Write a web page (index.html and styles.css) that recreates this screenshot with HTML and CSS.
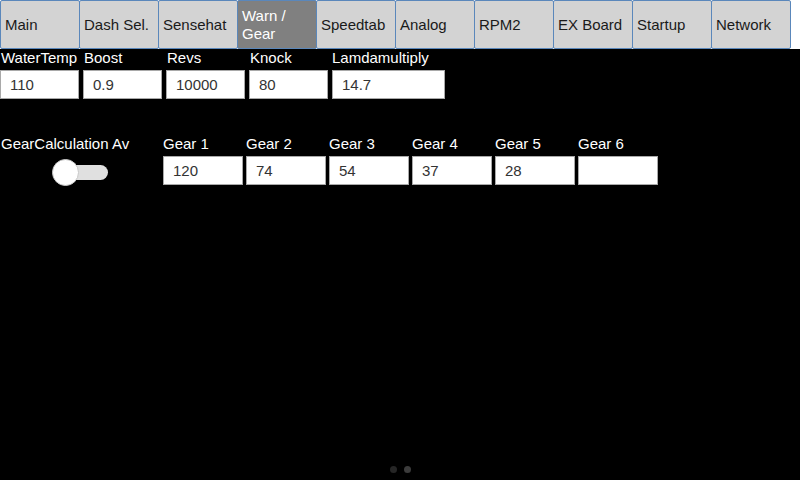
FILE: index.html
```html
<!DOCTYPE html>
<html>
<head>
<meta charset="utf-8">
<link rel="stylesheet" href="styles.css">
</head>
<body>
<div class="app">
  <nav class="tabbar">
    <div class="tab">Main</div>
    <div class="tab">Dash Sel.</div>
    <div class="tab">Sensehat</div>
    <div class="tab active">Warn / Gear</div>
    <div class="tab">Speedtab</div>
    <div class="tab">Analog</div>
    <div class="tab">RPM2</div>
    <div class="tab">EX Board</div>
    <div class="tab">Startup</div>
    <div class="tab">Network</div>
  </nav>
  <main class="content">
    <div class="row warn-row">
      <div class="field"><div class="label">WaterTemp</div><div class="input">110</div></div>
      <div class="field"><div class="label">Boost</div><div class="input">0.9</div></div>
      <div class="field"><div class="label">Revs</div><div class="input">10000</div></div>
      <div class="field"><div class="label">Knock</div><div class="input">80</div></div>
      <div class="field wide"><div class="label">Lamdamultiply</div><div class="input">14.7</div></div>
    </div>
    <div class="row gear-row">
      <div class="field switch-field">
        <div class="label">GearCalculation Av</div>
        <div class="switch"><span class="track"></span><span class="knob"></span></div>
      </div>
      <div class="field"><div class="label">Gear 1</div><div class="input">120</div></div>
      <div class="field"><div class="label">Gear 2</div><div class="input">74</div></div>
      <div class="field"><div class="label">Gear 3</div><div class="input">54</div></div>
      <div class="field"><div class="label">Gear 4</div><div class="input">37</div></div>
      <div class="field"><div class="label">Gear 5</div><div class="input">28</div></div>
      <div class="field"><div class="label">Gear 6</div><div class="input"></div></div>
    </div>
  </main>
  <div class="pager">
    <span class="dot"></span>
    <span class="dot current"></span>
  </div>
</div>
</body>
</html>
```
FILE: styles.css
```css
* { box-sizing: border-box; }
html, body { margin: 0; padding: 0; }
body {
  width: 800px;
  height: 480px;
  background: #000;
  font-family: "Liberation Sans", Arial, sans-serif;
  font-size: 15px;
  overflow: hidden;
}
.app {
  display: flex;
  flex-direction: column;
  height: 480px;
}
.tabbar {
  display: flex;
  height: 49px;
  background: #fff;
  flex: none;
}
.tab {
  width: 80px;
  height: 49px;
  margin-right: -1px;
  background: #d3d3d3;
  border: 1px solid #5a87bb;
  border-radius: 2px;
  color: #1a1a1a;
  padding-left: 4px;
  display: flex;
  align-items: center;
  line-height: 18px;
}
.tab.active {
  background: #808080;
  color: #fff;
}
.content {
  flex: 1;
  display: flex;
  flex-direction: column;
  gap: 36px;
}
.row {
  display: flex;
  gap: 4px;
}
.field {
  width: 79px;
  display: flex;
  flex-direction: column;
}
.field.wide { width: 113px; }
.field.switch-field { width: 159px; align-items: center; }
.switch-field .label { align-self: flex-start; }
.label {
  color: #fff;
  line-height: 18px;
  white-space: nowrap;
  padding-left: 1px;
}
.warn-row .field.wide .label { padding-left: 0; }
.gear-row .field:not(.switch-field) .label { padding-left: 0; }
.input {
  margin-top: 3px;
  height: 29px;
  background: #fff;
  border: 1px solid #a9a9a9;
  color: #333;
  padding-left: 9px;
  line-height: 27px;
}
.gear-row .input { width: 80px; }
.switch {
  margin-top: 4px;
  width: 56px;
  height: 30px;
  display: flex;
  align-items: center;
}
.track {
  width: 46px;
  height: 15px;
  margin-left: 10px;
  border-radius: 8px;
  background: #e0e0e0;
}
.knob {
  width: 27px;
  height: 27px;
  border-radius: 50%;
  background: #fff;
  border: 1px solid #c8c8c8;
  margin-left: -56px;
}
.pager {
  flex: none;
  display: flex;
  justify-content: center;
  gap: 7px;
  padding-bottom: 7px;
}
.dot {
  width: 7px;
  height: 7px;
  border-radius: 50%;
  background: #262626;
}
.dot.current { background: #3c3c3c; }
```
